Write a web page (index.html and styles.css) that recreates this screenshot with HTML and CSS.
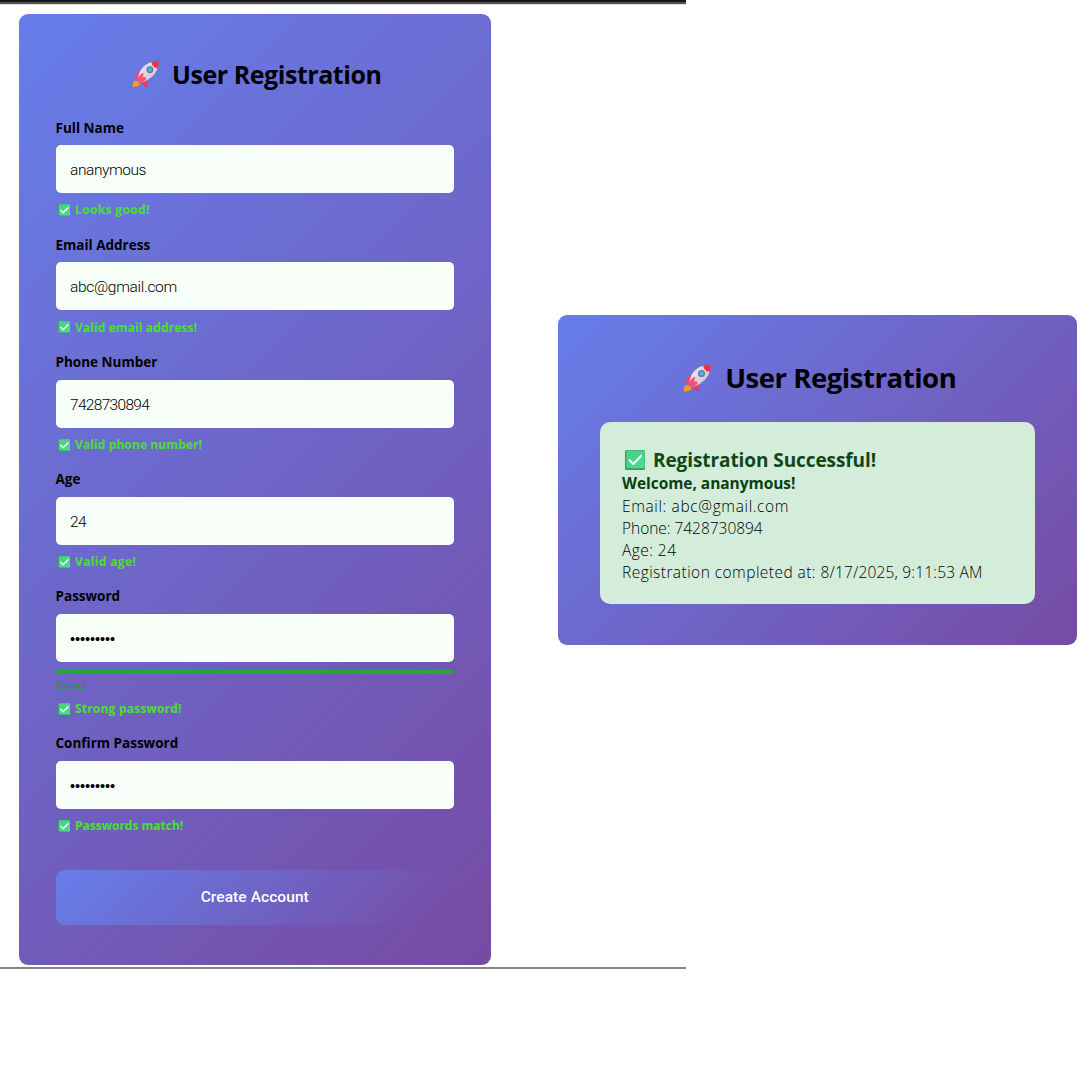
FILE: index.html
```html
<!DOCTYPE html>
<html lang="en">
<head>
<meta charset="utf-8">
<title>User Registration</title>
<link rel="stylesheet" href="styles.css">
</head>
<body>
<svg class="defs" width="0" height="0" aria-hidden="true">
  <defs>
    <linearGradient id="body" x1="0" y1="0" x2="1" y2="1"><stop offset="0" stop-color="#f4eff2"/><stop offset="1" stop-color="#c9bccb"/></linearGradient>
    <linearGradient id="green" x1="0" y1="0" x2="1" y2="1"><stop offset="0" stop-color="#4fc98a"/><stop offset="1" stop-color="#4fdc8c"/></linearGradient>
    <symbol id="rocket" viewBox="0 0 28 28">
      <path d="M2.500 21 8 21.500 8 25.500Q6 27.500 .500 27.500 .500 23.500 2.500 21Z" fill="#f99b1c"/>
      <path d="M9 12.500 4.500 12.300Q5.500 15 3.500 16.500L1 18.500 7 19Z" fill="#f2456f"/>
      <path d="M16 18.500 15.500 27.500 12 26 9 22Z" fill="#e83668"/>
      <path d="M6 20Q7 10 13 5.500 18.500 .800 26 1 28.300 7.500 23.500 14 18 20.500 9.500 23Z" fill="url(#body)"/>
      <path d="M20 1.800Q23.500 .300 27 .500 28.500 4 26.500 8Q21.500 7.500 20 1.800Z" fill="#ee3048"/>
      <path d="M5 20.500Q7 15.500 11.500 12.500 12.500 15 11 17.500 14 16.500 15 19 12.500 22 8.500 23.500Z" fill="#f34f79"/>
      <circle cx="18.500" cy="9.500" r="3.500" fill="#646f8c"/>
      <circle cx="18.500" cy="9.500" r="2.400" fill="#45b4e8"/>
    </symbol>
    <symbol id="check" viewBox="0 0 20 20">
      <rect width="20" height="20" rx="1.500" fill="#2f9d62"/>
      <rect x="1.300" y=".500" width="18.400" height="17.700" rx="1" fill="url(#green)"/>
      <path d="M4.500 10 8.300 14 16 6" fill="none" stroke="#fff" stroke-width="1.900" stroke-linecap="round" stroke-linejoin="round"/>
    </symbol>
  </defs>
</svg>
<div class="board">
  <section class="shot">
    <form class="card form">
      <h1 class="title"><svg class="rocket"><use href="#rocket"/></svg><span>User Registration</span></h1>
      <div class="field">
        <label class="label">Full Name</label>
        <div class="input name">ananymous</div>
        <p class="msg"><svg class="tick"><use href="#check"/></svg><span class="wide">Looks good!</span></p>
      </div>
      <div class="field">
        <label class="label">Email Address</label>
        <div class="input mail">abc@gmail.com</div>
        <p class="msg"><svg class="tick"><use href="#check"/></svg><span class="normal">Valid email address!</span></p>
      </div>
      <div class="field">
        <label class="label">Phone Number</label>
        <div class="input digits">7428730894</div>
        <p class="msg"><svg class="tick"><use href="#check"/></svg><span class="normal">Valid phone number!</span></p>
      </div>
      <div class="field">
        <label class="label">Age</label>
        <div class="input digits">24</div>
        <p class="msg"><svg class="tick"><use href="#check"/></svg><span class="wide">Valid age!</span></p>
      </div>
      <div class="field secret">
        <label class="label">Password</label>
        <div class="input dots">•••••••••</div>
        <div class="meter"></div>
        <p class="strength">Good</p>
        <p class="msg"><svg class="tick"><use href="#check"/></svg><span class="medium">Strong password!</span></p>
      </div>
      <div class="field">
        <label class="label">Confirm Password</label>
        <div class="input dots">•••••••••</div>
        <p class="msg"><svg class="tick"><use href="#check"/></svg><span>Passwords match!</span></p>
      </div>
      <button type="button" class="submit">Create Account</button>
    </form>
  </section>
  <section class="card done">
    <h1 class="title big"><svg class="rocket"><use href="#rocket"/></svg><span>User Registration</span></h1>
    <div class="result">
      <h2 class="success"><svg class="tick"><use href="#check"/></svg><span>Registration Successful!</span></h2>
      <p class="welcome">Welcome, ananymous!</p>
      <p class="line email">Email: abc@gmail.com</p>
      <p class="line phone">Phone: 7428730894</p>
      <p class="line age">Age: 24</p>
      <p class="line stamp">Registration completed at: <span class="date">8/17/2025, 9:11:53 AM</span></p>
    </div>
  </section>
</div>
</body>
</html>
```
FILE: styles.css
```css
* { box-sizing: border-box; }
body { margin: 0; background: #fff; font-family: "Open Sans", "Noto Sans", sans-serif; overflow: hidden; }
h1, h2, p { margin: 0; }
.defs { display: block; height: 0; }
.board { display: flex; align-items: flex-start; width: 1080px; height: 1080px; }
.shot { width: 686px; height: 969px; flex: none; padding: 14px 0 0 18.5px; background: linear-gradient(#171717 0 2px, #555 2px 4px, #ddd 4px 5px, transparent 5px); border-bottom: 2px solid #858585; margin-right: -128px; }
.card { background: linear-gradient(135deg, #667eea 0%, #764ba2 100%); border-radius: 9px; }
.form { width: 472.5px; height: 951px; padding: 41px 37px 0; }
.title { display: flex; justify-content: center; align-items: center; gap: 13px; height: 38px; padding-left: 4px; font-size: 25px; font-weight: 700; line-height: 38px; color: #000; white-space: nowrap; margin-bottom: 25.500px; }
.title .rocket { width: 27px; height: 28px; flex: none; }
.title span { letter-spacing: -.45px; }
.field { height: 117.200px; }
.secret { height: 146.700px; }
.label { display: block; height: 18px; margin-bottom: 8.700px; font-size: 13.500px; line-height: 18.500px; font-weight: 700; color: #000; white-space: nowrap; }
.input { height: 48px; padding: 0 14.500px; border-radius: 5px; background: #f8fff9; color: #000; font: 300 15.500px/50px Roboto, sans-serif; }
.name { letter-spacing: -.42px; }
.mail { letter-spacing: -.3px; }
.digits { letter-spacing: -.68px; }
.dots { font-family: "Liberation Sans", sans-serif; font-size: 14.500px; letter-spacing: -.08px; color: #000; }
.msg { display: flex; align-items: center; gap: 5px; height: 18px; margin-top: 8.300px; padding-left: 2px; font-size: 12px; font-weight: 700; line-height: 18px; color: #4be02c; white-space: nowrap; }
.msg .tick { width: 12.500px; height: 12.500px; flex: none; }
.wide { letter-spacing: .35px; }
.medium { letter-spacing: .2px; }
.normal { letter-spacing: .1px; }
.meter { height: 4.500px; margin-top: 8px; background: #21aa35; border-radius: 2px; }
.strength { height: 17px; margin-top: 1.500px; font-size: 11.500px; line-height: 17px; color: #169c2b; }
.secret .msg { margin-top: 7.300px; }
.submit { display: block; width: 100%; height: 55px; margin-top: 18.500px; padding: 0; border: 0; border-radius: 9px; background: linear-gradient(135deg, #667eea 0%, #764ba2 100%); color: #fff; font: 500 15.500px/55px Roboto, sans-serif; letter-spacing: .08px; }
.done { width: 518.500px; height: 330px; margin-top: 315px; flex: none; padding: 43px 42px 0; }
.big { font-size: 27.500px; height: 40px; line-height: 40px; margin-bottom: 24px; }
.big .rocket { width: 30px; height: 28px; }
.result { height: 182px; padding: 25px 22px 0; border-radius: 10px; background: #d4edda; color: #111; }
.success { display: flex; align-items: center; gap: 8px; height: 25px; padding-left: 3px; font-size: 19px; line-height: 24px; font-weight: 700; letter-spacing: -.08px; color: #0f4718; white-space: nowrap; }
.success .tick { width: 20px; height: 20px; flex: none; }
.welcome { height: 22px; font-size: 15.500px; line-height: 23px; font-weight: 700; letter-spacing: -.05px; color: #0a400f; white-space: nowrap; }
.line { height: 22px; font-size: 15.500px; line-height: 25px; font-weight: 300; white-space: nowrap; color: #000; }
.email { letter-spacing: .63px; }
.phone { letter-spacing: -.03px; }
.age { letter-spacing: .45px; }
.stamp { letter-spacing: .45px; }
.date { letter-spacing: .18px; }
```
